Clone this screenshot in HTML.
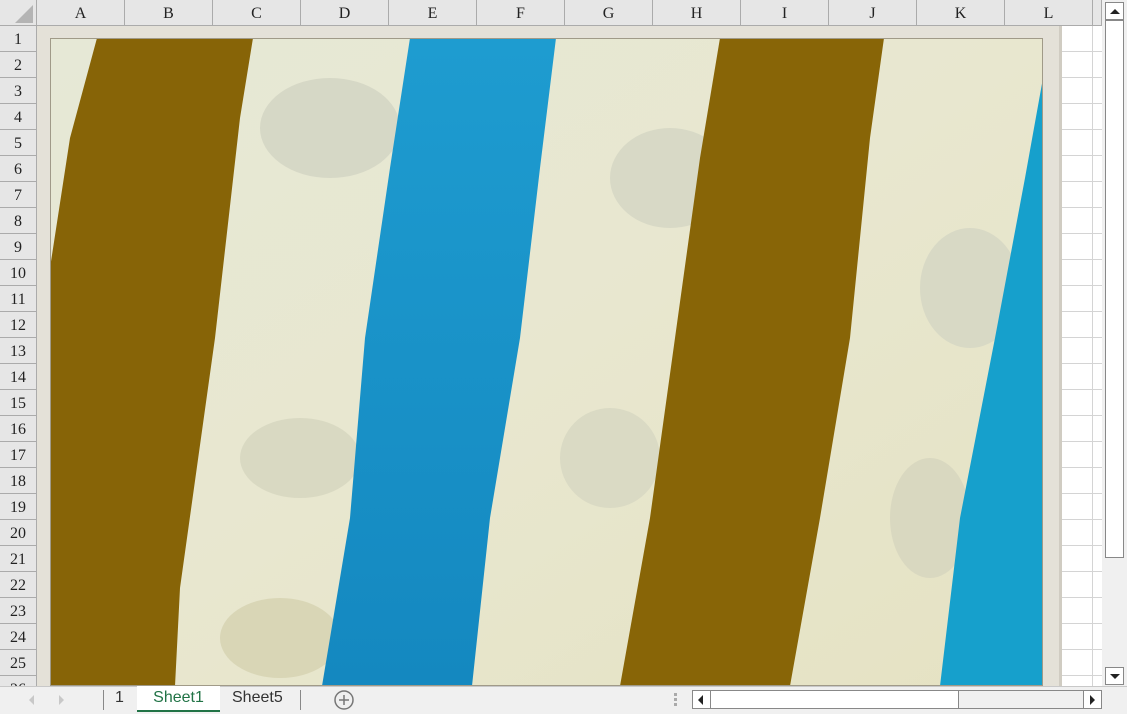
<!DOCTYPE html>
<html><head><style>
*{margin:0;padding:0;box-sizing:border-box}
body{width:1127px;height:714px;overflow:hidden;background:#fff;font-family:"Liberation Serif",serif;position:relative}
.ch{position:absolute;top:0;height:26px;background:#e6e6e6;border-right:1px solid #ababab;border-bottom:1px solid #ababab;font-size:16px;text-align:center;line-height:28px;color:#222}
.rh{position:absolute;left:0;width:37px;height:26px;background:#e6e6e6;border-bottom:1px solid #ababab;border-right:1px solid #ababab;font-size:16px;text-align:center;line-height:28px;color:#222}
.vl{position:absolute;top:26px;width:1px;height:660px;background:#d4d4d4}
.hl{position:absolute;left:37px;width:1065px;height:1px;background:#d4d4d4}
</style></head><body>
<div style="position:absolute;left:0;top:0;width:37px;height:26px;background:#e6e6e6;border-right:1px solid #ababab;border-bottom:1px solid #ababab"></div>
<svg style="position:absolute;left:14px;top:4px" width="20" height="20"><polygon points="19,1 19,19 1,19" fill="#b4b4b4"/></svg>
<div id="g"></div>
<script>
var h='';var L='ABCDEFGHIJKL';
for(var i=0;i<12;i++){h+='<div class="ch" style="left:'+(37+i*88)+'px;width:88px">'+L[i]+'</div>';h+='<div class="vl" style="left:'+(124+i*88)+'px"></div>';}
h+='<div class="ch" style="left:1093px;width:9px"></div>';
for(var r=0;r<26;r++){var y=26+r*26;h+='<div class="rh" style="top:'+y+'px">'+(r+1)+'</div>';h+='<div class="hl" style="top:'+(y+25)+'px"></div>';}
document.getElementById('g').innerHTML=h;
</script>
<div style="position:absolute;left:37px;top:26px;width:1025px;height:660px;background:#e4e1d8;border-right:3px solid #d0ccc2"></div>
<svg style="position:absolute;left:50px;top:38px" width="993" height="648" viewBox="0 0 993 648">
<defs><linearGradient id="bg" x1="0" y1="0" x2="1" y2="1"><stop offset="0" stop-color="#e6e8d6"/><stop offset="0.5" stop-color="#e8e7cf"/><stop offset="1" stop-color="#e5e2c3"/></linearGradient>
<linearGradient id="bl" x1="0" y1="0" x2="0" y2="1"><stop offset="0" stop-color="#1e9cd0"/><stop offset="1" stop-color="#1488c0"/></linearGradient></defs>
<rect width="993" height="648" fill="url(#bg)"/>
<ellipse cx="280" cy="90" rx="70" ry="50" fill="#d6d8c6"/>
<ellipse cx="250" cy="420" rx="60" ry="40" fill="#d9d9c2"/>
<ellipse cx="620" cy="140" rx="60" ry="50" fill="#d8d9c6"/>
<ellipse cx="560" cy="420" rx="50" ry="50" fill="#dadac4"/>
<ellipse cx="920" cy="250" rx="50" ry="60" fill="#d8d9c5"/>
<ellipse cx="880" cy="480" rx="40" ry="60" fill="#d9d8c0"/>
<ellipse cx="230" cy="600" rx="60" ry="40" fill="#d9d6b6"/>
<polygon points="47,0 203,0 190,80 165,300 130,550 125,648 0,648 0,230 20,100" fill="#876407"/>
<polygon points="360,0 506,0 490,130 470,300 440,480 422,648 272,648 300,480 315,300 340,130" fill="url(#bl)"/>
<polygon points="670,0 834,0 820,100 800,300 770,480 740,648 570,648 600,480 625,300 650,120" fill="#886507"/>
<polygon points="993,40 993,648 890,648 910,480 945,300 975,140" fill="#16a0cc"/>
<rect x="0.5" y="0.5" width="992" height="647" fill="none" stroke="#a09a88"/>
</svg>
<!-- vertical scrollbar -->
<div style="position:absolute;left:1102px;top:0;width:25px;height:686px;background:#f0f0f0"></div>
<div style="position:absolute;left:1105px;top:2px;width:19px;height:18px;border:1px solid #888;background:#fff"></div>
<svg style="position:absolute;left:1109px;top:7px" width="12" height="8"><polygon points="1,7 6,2 11,7" fill="#222"/></svg>
<div style="position:absolute;left:1105px;top:20px;width:19px;height:538px;border:1px solid #888;background:#fff"></div>
<div style="position:absolute;left:1105px;top:667px;width:19px;height:18px;border:1px solid #888;background:#fff"></div>
<svg style="position:absolute;left:1109px;top:673px" width="12" height="8"><polygon points="1,1 6,6 11,1" fill="#222"/></svg>
<!-- bottom bar -->
<div style="position:absolute;left:0;top:686px;width:1127px;height:28px;background:#f0f0f0;border-top:1px solid #c8c8c8"></div>
<svg style="position:absolute;left:24px;top:692px" width="50" height="16"><polygon points="10,3 5,8 10,13" fill="#c8c8c8"/><polygon points="35,3 40,8 35,13" fill="#c8c8c8"/></svg>
<div style="position:absolute;left:103px;top:690px;width:1px;height:20px;background:#888"></div>
<div style="position:absolute;left:115px;top:686px;font:16px 'Liberation Sans',sans-serif;line-height:24px;color:#333">1</div>
<div style="position:absolute;left:137px;top:686px;width:83px;height:26px;background:#fff;border-bottom:2px solid #217346;text-align:center;font:16px 'Liberation Sans',sans-serif;line-height:24px;color:#217346">Sheet1</div>
<div style="position:absolute;left:232px;top:686px;font:16px 'Liberation Sans',sans-serif;line-height:24px;color:#333">Sheet5</div>
<div style="position:absolute;left:300px;top:690px;width:1px;height:20px;background:#888"></div>
<svg style="position:absolute;left:333px;top:689px" width="22" height="22"><circle cx="11" cy="11" r="9" fill="none" stroke="#777" stroke-width="1.5"/><path d="M11 6v10M6 11h10" stroke="#777" stroke-width="1.5"/></svg>
<svg style="position:absolute;left:674px;top:692px" width="6" height="16"><rect x="0" y="1" width="3" height="3" fill="#aaa"/><rect x="0" y="6" width="3" height="3" fill="#aaa"/><rect x="0" y="11" width="3" height="3" fill="#aaa"/></svg>
<div style="position:absolute;left:692px;top:690px;width:410px;height:19px;border:1px solid #888;background:#f0f0f0"></div>
<div style="position:absolute;left:692px;top:690px;width:19px;height:19px;border:1px solid #888;background:#fff"></div>
<svg style="position:absolute;left:697px;top:694px" width="8" height="12"><polygon points="6,1 1,6 6,11" fill="#222"/></svg>
<div style="position:absolute;left:710px;top:690px;width:249px;height:19px;border:1px solid #888;background:#fff"></div>
<div style="position:absolute;left:1083px;top:690px;width:19px;height:19px;border:1px solid #888;background:#fff"></div>
<svg style="position:absolute;left:1089px;top:694px" width="8" height="12"><polygon points="1,1 6,6 1,11" fill="#222"/></svg>
</body></html>
